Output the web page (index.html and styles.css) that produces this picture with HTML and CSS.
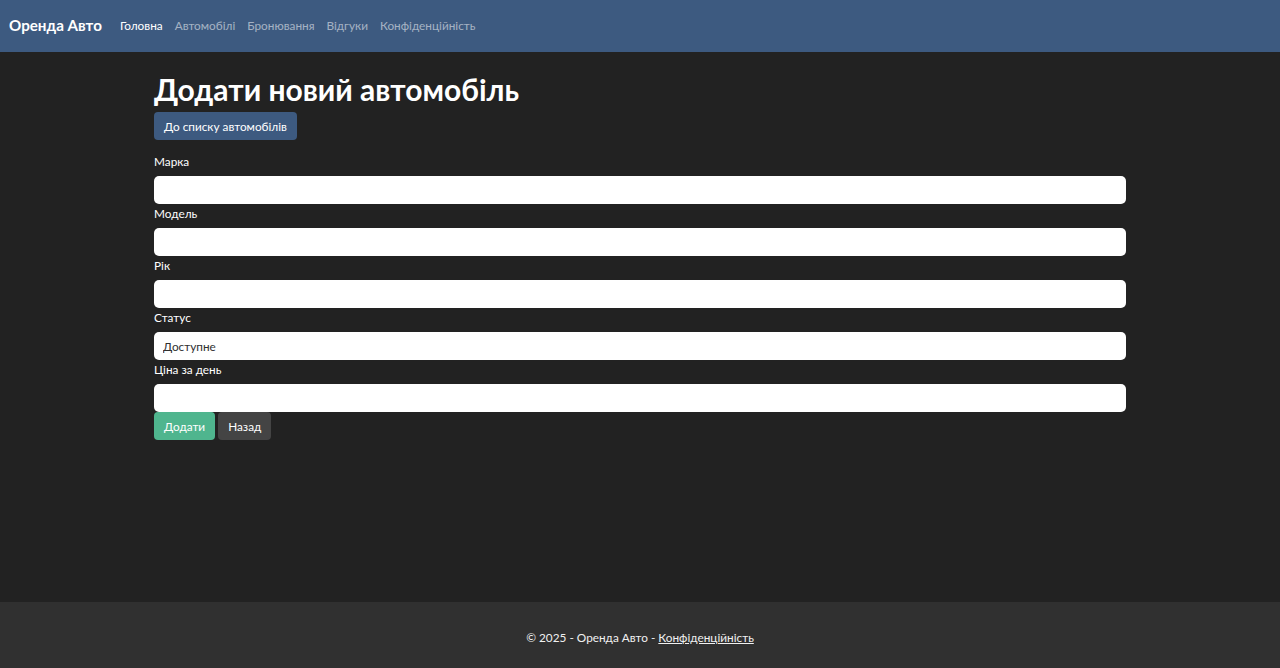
FILE: index.html
```html
<!DOCTYPE html>
<html lang="uk">
<head>
<meta charset="utf-8">
<title>Додати новий автомобіль - Оренда Авто</title>
<link rel="stylesheet" href="styles.css">
</head>
<body>
<div class="page">
  <header class="navbar">
    <a class="brand" href="#">Оренда Авто</a>
    <nav class="nav">
      <a class="nav-link active" href="#">Головна</a>
      <a class="nav-link" href="#">Автомобілі</a>
      <a class="nav-link" href="#">Бронювання</a>
      <a class="nav-link" href="#">Відгуки</a>
      <a class="nav-link" href="#">Конфіденційність</a>
    </nav>
  </header>
  <main class="container">
    <h1 class="title">Додати новий автомобіль</h1>
    <a class="btn btn-primary" href="#">До списку автомобілів</a>
    <form class="form">
      <div class="group">
        <label class="label">Марка</label>
        <input class="control" type="text">
      </div>
      <div class="group">
        <label class="label">Модель</label>
        <input class="control" type="text">
      </div>
      <div class="group">
        <label class="label">Рік</label>
        <input class="control" type="text">
      </div>
      <div class="group">
        <label class="label">Статус</label>
        <select class="control select">
          <option>Доступне</option>
        </select>
      </div>
      <div class="group">
        <label class="label">Ціна за день</label>
        <input class="control" type="text">
      </div>
      <div class="actions">
        <button class="btn btn-success" type="button">Додати</button>
        <a class="btn btn-secondary" href="#">Назад</a>
      </div>
    </form>
  </main>
  <footer class="footer">
    <span>© 2025 - Оренда Авто - <a class="footer-link" href="#">Конфіденційність</a></span>
  </footer>
</div>
</body>
</html>
```

FILE: styles.css
```css
* {
  box-sizing: border-box;
}

html, body {
  margin: 0;
  padding: 0;
  height: 100%;
}

body {
  background: #222222;
  color: #ffffff;
  font-family: Lato, "Noto Sans", sans-serif;
  font-size: 11.8px;
  line-height: 19px;
}

.page {
  min-height: 100vh;
  display: flex;
  flex-direction: column;
}

.navbar {
  height: 52px;
  background: #3d5a80;
  display: flex;
  align-items: center;
  padding: 0 9px 1px;
}

.brand {
  color: #ffffff;
  text-decoration: none;
  font-weight: 700;
  font-size: 15.2px;
  margin-right: 12px;
}

.nav {
  display: flex;
}

.nav-link {
  color: rgba(255, 255, 255, 0.55);
  text-decoration: none;
  font-size: 11.8px;
  padding: 0 6px;
}

.nav-link.active {
  color: #ffffff;
}

.container {
  flex: 1;
  width: 972px;
  margin: 0 auto;
  padding-top: 18px;
}

.title {
  margin: 0 0 4px;
  font-size: 30px;
  line-height: 38px;
  font-weight: 700;
}

.btn {
  display: inline-flex;
  align-items: center;
  height: 28px;
  padding: 0 10px;
  border: none;
  border-radius: 4px;
  color: #ffffff;
  font-family: inherit;
  font-size: 11.8px;
  text-decoration: none;
  cursor: pointer;
}

.btn-primary {
  background: #3d5a80;
}

.btn-success {
  background: #4fb58e;
}

.btn-secondary {
  background: #444444;
}

.form {
  margin-top: 12px;
}

.group {
  display: flex;
  flex-direction: column;
}

.label {
  display: block;
  margin-bottom: 5px;
}

.control {
  display: block;
  width: 100%;
  height: 28px;
  border: none;
  border-radius: 5px;
  background: #ffffff;
  color: #303030;
  font-family: inherit;
  font-size: 11.8px;
  padding: 0 9px;
  outline: none;
}

.select {
  appearance: none;
  -webkit-appearance: none;
}

.actions {
  display: flex;
  gap: 3px;
}

.footer {
  height: 66px;
  background: #303030;
  display: flex;
  align-items: center;
  justify-content: center;
  color: #f0f0f0;
  font-size: 11.8px;
  padding-top: 4px;
}

.footer-link {
  color: #f0f0f0;
  text-decoration: underline;
}
```
